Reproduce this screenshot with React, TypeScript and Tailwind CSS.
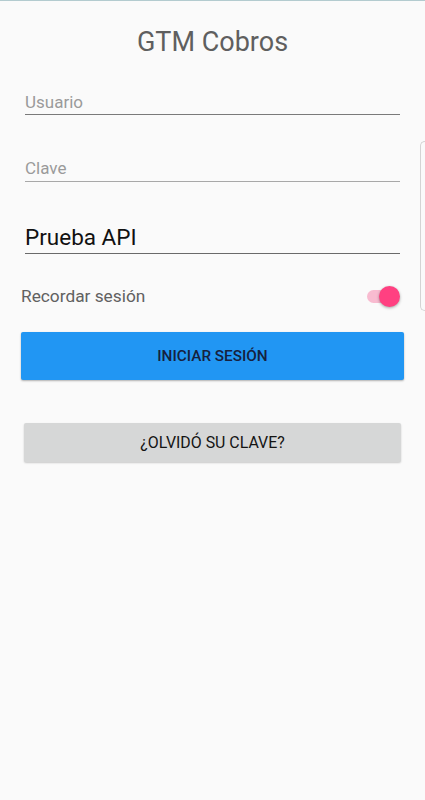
import React, { useState } from 'react';

export default function App() {
  const [remember, setRemember] = useState(true);

  return (
    <div className="relative min-h-[800px] w-full bg-[#fafafa] font-['Roboto',sans-serif] overflow-hidden">
      <div className="h-px bg-[#b3cbcf]" />

      {/* edge panel handle */}
      <div className="absolute right-0 top-[141px] h-[170px] w-[5px] rounded-l-[6px] border border-r-0 border-[#d4d4d4] bg-[#fafafa]" />

      <div className="flex flex-col">
        <h1 className="mt-[23px] text-center text-[27px] leading-[36px] text-[#5f5f5f]">GTM Cobros</h1>

        <div className="mx-[25px] mt-[32px] border-b border-[#7a7a7a] pb-[2px]">
          <input
            placeholder="Usuario"
            className="block w-full bg-transparent text-[17px] leading-[20px] text-[#222] placeholder:text-[#9a9a9a] outline-none"
          />
        </div>

        <div className="mx-[25px] mt-[43px] border-b border-[#a8a8a8] pb-[3px]">
          <input
            type="password"
            placeholder="Clave"
            className="block w-full bg-transparent text-[17px] leading-[20px] text-[#222] placeholder:text-[#9a9a9a] outline-none"
          />
        </div>

        <div className="mx-[25px] mt-[41px] border-b border-[#6a6a6a] pb-[2px]">
          <div className="text-[22.5px] leading-[28px] text-[#111]">Prueba API</div>
        </div>

        <div className="mx-[21px] mt-[30px] flex h-[24px] items-center justify-between">
          <span className="text-[17.3px] leading-[24px] text-[#616161]">Recordar sesión</span>
          <button
            onClick={() => setRemember(!remember)}
            className="relative mr-[4px] h-[24px] w-[36px]"
          >
            <span className={`absolute left-[3px] top-[6px] h-[13px] w-[30px] rounded-full ${remember ? 'bg-[#f8bbd0]' : 'bg-[#bdbdbd]'}`} />
            <span
              className={`absolute top-[1.5px] h-[21px] w-[21px] rounded-full shadow-[0_1px_3px_rgba(0,0,0,0.35)] ${remember ? 'right-0 bg-[#ff4081]' : 'left-0 bg-[#f1f1f1]'}`}
            />
          </button>
        </div>

        <button className="mx-[21px] mt-[24px] h-[48px] rounded-[2px] bg-[#2196f3] text-[15.3px] font-medium text-[#16213e] shadow-[0_1px_2px_rgba(0,0,0,0.3)]">
          INICIAR SESIÓN
        </button>

        <button className="mx-[24px] mt-[43px] h-[39px] rounded-[2px] bg-[#d6d7d7] text-[15.9px] text-[#141414] shadow-[0_1px_2px_rgba(0,0,0,0.2)]">
          ¿OLVIDÓ SU CLAVE?
        </button>
      </div>
    </div>
  );
}
